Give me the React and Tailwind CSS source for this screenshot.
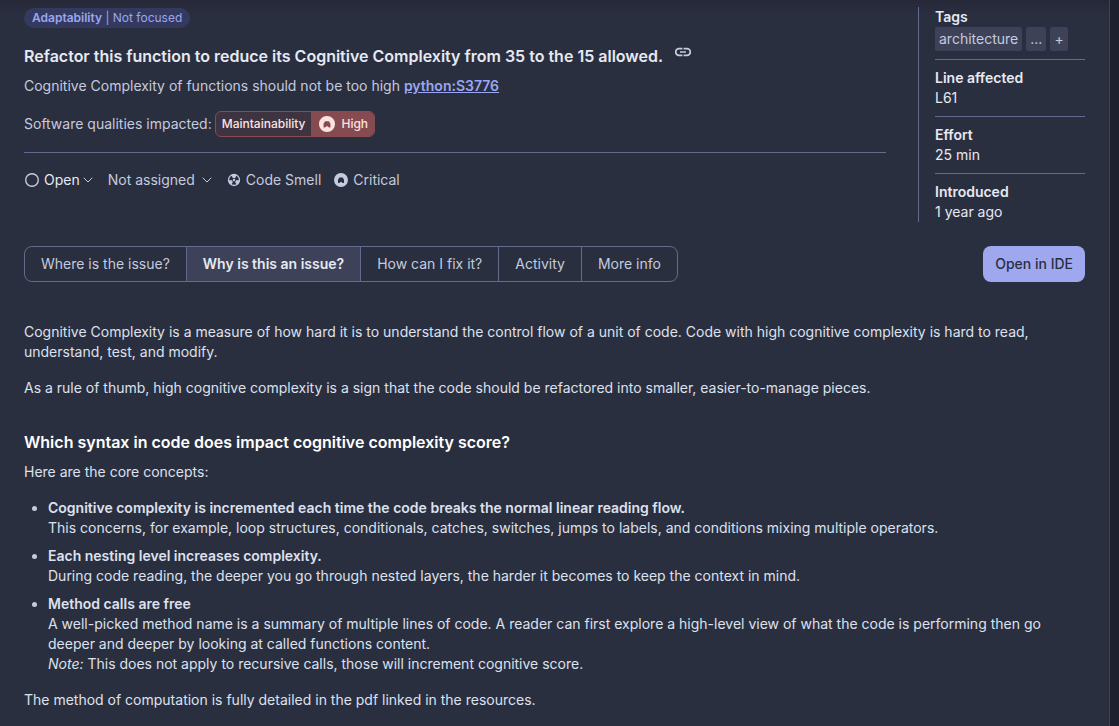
import React from "react";

const Chevron = () => (
  <svg width="10" height="6" viewBox="0 0 10 6" fill="none" stroke="currentColor" strokeWidth="1" strokeLinecap="round" strokeLinejoin="round" aria-hidden="true">
    <path d="M1 1l4 4 4-4" />
  </svg>
);

const Severity = ({ className }) => (
  <svg width="16" height="16" viewBox="0 0 16 16" className={className} aria-hidden="true">
    <path fill="currentColor" fillRule="evenodd" d="M8 1a7 7 0 1 1 0 14A7 7 0 0 1 8 1zM5 11h1.200L8 9.700l1.800 1.300H11V7.700L9.700 5.600H6.300L5 7.700z" />
  </svg>
);

const CodeSmell = () => (
  <svg width="14" height="14" viewBox="0 0 14 14" fill="none" aria-hidden="true">
    <circle cx="7" cy="7" r="5.500" stroke="currentColor" strokeWidth="1.300" />
    <circle cx="7" cy="7" r="1.200" fill="currentColor" />
    <path fill="currentColor" d="M6 5.200L4.200 2.100A5.600 5.600 0 0 1 9.800 2.100L8 5.200a2 2 0 0 0-2 0zM5 7.200H1.400A5.600 5.600 0 0 0 4.200 11.900L6 8.800a2 2 0 0 1-1-1.600zM9 7.200h3.600A5.600 5.600 0 0 1 9.800 11.900L8 8.800a2 2 0 0 0 1-1.600z" />
  </svg>
);

const LinkIcon = () => (
  <svg width="16" height="16" viewBox="0 0 16 16" fill="none" stroke="currentColor" strokeWidth="1.700" aria-hidden="true">
    <path d="M7.400 4.700H4a3.300 3.300 0 0 0 0 6.600h3.400M8.600 4.700H12a3.300 3.300 0 0 1 0 6.600H8.600M5 8h6" />
  </svg>
);

const details = [
  ["Line affected", "L61"],
  ["Effort", "25 min"],
  ["Introduced", "1 year ago"],
];

const tabs = ["Where is the issue?", "Why is this an issue?", "How can I fix it?", "Activity", "More info"];

function IssueHeader() {
  return (
    <header className="flex items-start gap-8">
      <div className="min-w-0 flex-1">
        <p className="flex h-5 w-fit items-center whitespace-pre rounded-full bg-[#343a5f] px-2 text-xs text-[#9ba6f0]">
          <span className="font-semibold">Adaptability</span> | Not focused
        </p>
        <div className="mt-4 flex gap-3">
          <h1 className="text-base leading-6 font-semibold text-[#e6e9f2]">
            Refactor this function to reduce its Cognitive Complexity from 35 to the 15 allowed.
          </h1>
          <button type="button" aria-label="Copy link to issue" className="h-4 text-[#c5cade]">
            <LinkIcon />
          </button>
        </div>
        <p className="mt-2 leading-5">
          Cognitive Complexity of functions should not be too high{" "}
          <a href="#rule" className="font-semibold text-[#9ba6f0] underline">python:S3776</a>
        </p>
        <div className="mt-[15px] flex items-center gap-[3px]">
          <span>Software qualities impacted:</span>
          <button type="button" className="flex h-[26px] overflow-hidden rounded-md border border-[#864a51] bg-[#3e3340] text-xs font-medium text-[#fde3e0]">
            <span className="flex h-full items-center px-1.5">Maintainability</span>
            <span className="flex h-full items-center gap-1.5 bg-[#864a51] pr-1.5 pl-2">
              <Severity className="scale-115" />
              High
            </span>
          </button>
        </div>
        <hr className="mt-[15px] border-[#626b8d]" />
        <div className="mt-[15px] flex h-6 items-center">
          <button type="button" className="flex items-center gap-1 text-[#e6e9f2]">
            <svg width="16" height="16" viewBox="0 0 16 16" fill="none" stroke="#c5cade" strokeWidth="1.400" aria-hidden="true">
              <circle cx="8" cy="8" r="6.300" />
            </svg>
            Open
            <span className="-ml-px text-[#c5cade]"><Chevron /></span>
          </button>
          <button type="button" className="ml-[15px] flex items-center gap-[7px]">
            Not assigned
            <Chevron />
          </button>
          <span className="ml-[15px] flex items-center gap-[5px]"><CodeSmell /> Code Smell</span>
          <span className="ml-3 flex items-center gap-1"><Severity /> Critical</span>
        </div>
      </div>
      <aside className="-mt-px w-[167px] shrink-0 border-l border-[#626b8d] pl-4 text-[#e6e9f2]">
        <div className="border-b border-[#626b8d] pb-2">
          <h2 className="leading-5 font-semibold">Tags</h2>
          <div className="flex gap-1 text-[#c5cade]">
            <span className="rounded-xs bg-[#3e4258] px-1 leading-6">architecture</span>
            <button type="button" aria-label="Show all tags" className="w-5 rounded-xs bg-[#3e4258] leading-6">...</button>
            <button type="button" aria-label="Add tag" className="w-[18px] rounded-xs bg-[#3e4258] leading-6">+</button>
          </div>
        </div>
        {details.map(([label, value]) => (
          <div key={label} className="border-b border-[#626b8d] py-2 last:border-b-0 last:pb-0">
            <h2 className="leading-5 font-semibold">{label}</h2>
            <p className="leading-5">{value}</p>
          </div>
        ))}
      </aside>
    </header>
  );
}

function TabBar() {
  return (
    <div className="mt-6 flex items-center justify-between">
      <div role="tablist" className="flex h-9 divide-x divide-[#626b8d] overflow-hidden rounded-lg border border-[#626b8d]">
        {tabs.map((tab) => (
          <button
            key={tab}
            type="button"
            role="tab"
            aria-selected={tab === "Why is this an issue?"}
            className="px-4 aria-selected:bg-[#3e4258] aria-selected:font-semibold aria-selected:text-[#e6e9f2]"
          >
            {tab}
          </button>
        ))}
      </div>
      <button type="button" className="h-9 rounded-lg bg-[#9fa8ee] px-3 font-medium text-[#2a2f40]">Open in IDE</button>
    </div>
  );
}

export default function App() {
  return (
    <div className="flex min-h-screen bg-[#1d202e] font-['Inter',sans-serif] text-sm text-[#c5cade]">
      <main className="mr-[9px] flex-1 border-r border-[#3e4258] bg-[#2a2f40] bg-linear-to-b from-[#262838] to-[#2a2f40] to-[16px] pt-2 pr-6 pb-4 pl-6">
        <IssueHeader />
        <TabBar />
        <article className="mt-10 leading-5 text-[#dde1ed]">
          <p>
            Cognitive Complexity is a measure of how hard it is to understand the control flow of a unit of code. Code with high cognitive complexity is hard to read, understand, test, and modify.
          </p>
          <p className="mt-4">
            As a rule of thumb, high cognitive complexity is a sign that the code should be refactored into smaller, easier-to-manage pieces.
          </p>
          <h2 className="mt-8 text-base leading-6 font-semibold text-white">Which syntax in code does impact cognitive complexity score?</h2>
          <p className="mt-2">Here are the core concepts:</p>
          <ul className="mt-4 list-disc space-y-2 pl-6 marker:text-[#c5cade]">
            <li>
              <strong className="font-semibold">Cognitive complexity is incremented each time the code breaks the normal linear reading flow.</strong>
              <br />
              This concerns, for example, loop structures, conditionals, catches, switches, jumps to labels, and conditions mixing multiple operators.
            </li>
            <li>
              <strong className="font-semibold">Each nesting level increases complexity.</strong>
              <br />
              During code reading, the deeper you go through nested layers, the harder it becomes to keep the context in mind.
            </li>
            <li>
              <strong className="font-semibold">Method calls are free</strong>
              <br />
              A well-picked method name is a summary of multiple lines of code. A reader can first explore a high-level view of what the code is performing then go deeper and deeper by looking at called functions content.
              <br />
              <em>Note:</em> This does not apply to recursive calls, those will increment cognitive score.
            </li>
          </ul>
          <p className="mt-4">The method of computation is fully detailed in the pdf linked in the resources.</p>
        </article>
      </main>
    </div>
  );
}
